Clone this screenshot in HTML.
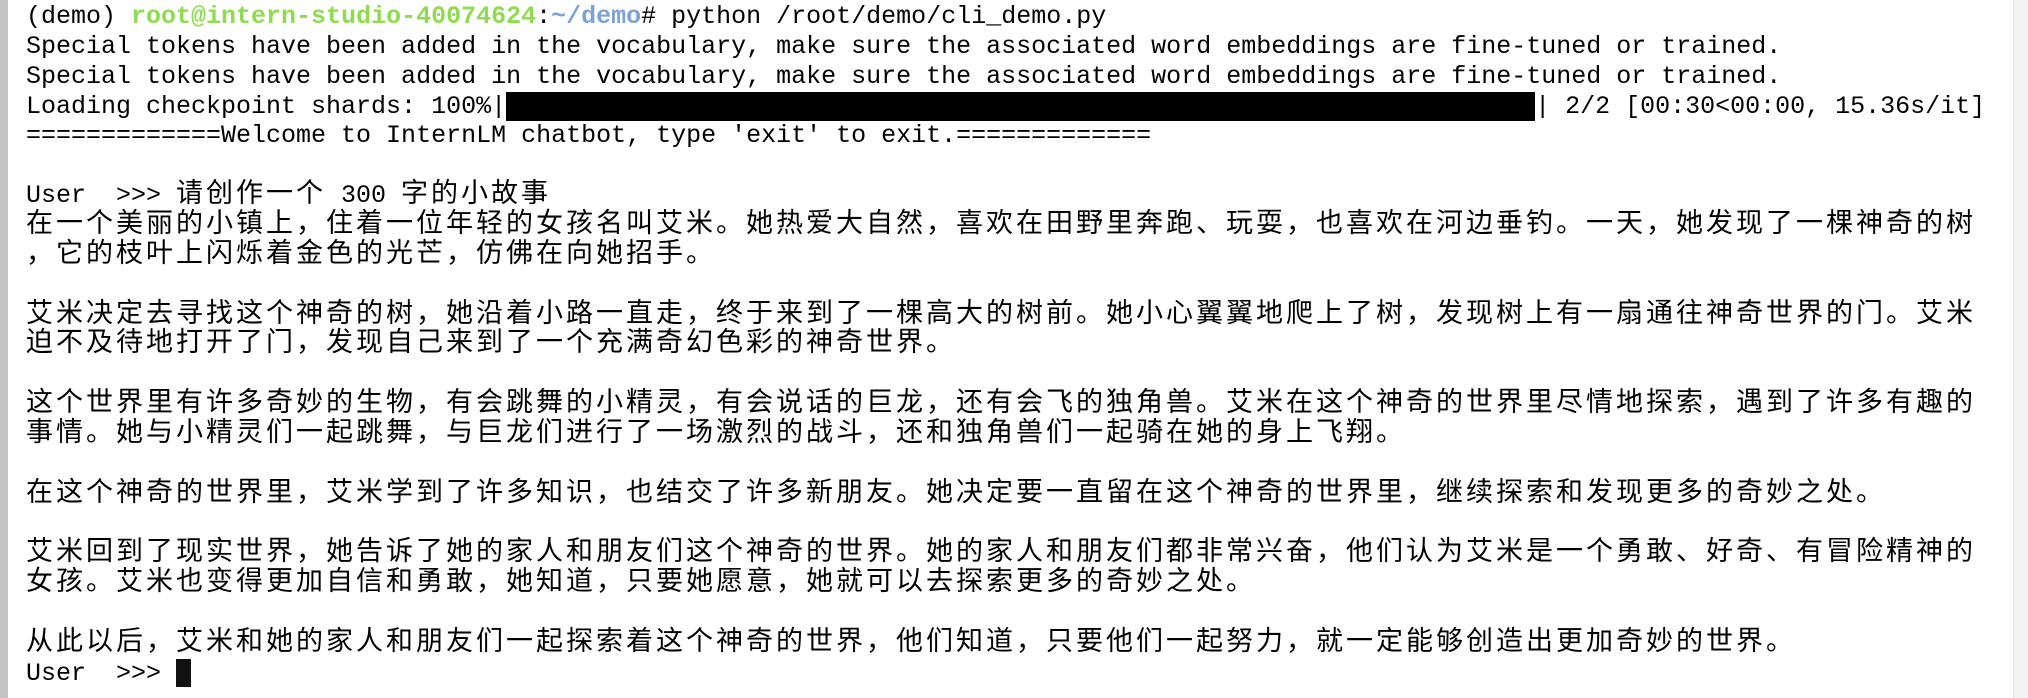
<!DOCTYPE html>
<html><head><meta charset="utf-8"><style>
html,body{margin:0;padding:0;}
body{width:2028px;height:698px;background:#fff;position:relative;overflow:hidden;}
.lb{position:absolute;left:0;top:0;width:8px;height:698px;background:#c4c4c4;}
.rb{position:absolute;left:2013px;top:0;width:15px;height:698px;background:#f3f3f3;border-left:1px solid #e2e2e2;}
pre{position:absolute;left:26px;top:2px;margin:0;font-family:"Liberation Mono","Noto Sans CJK SC",monospace;font-size:25px;line-height:29.86px;color:#000;white-space:pre;}
.c{letter-spacing:3px;font-size:27px;font-family:"Liberation Mono","Noto Sans CJK SC",sans-serif;line-height:0;}
.g{color:#8fdc4f;font-weight:bold;}
.b{color:#7ea3d3;font-weight:bold;}
.bar{display:inline-block;width:1029px;height:29.86px;background:#000;vertical-align:top;}
.cur{display:inline-block;width:15px;height:28px;background:#111;vertical-align:top;}
</style></head><body>
<div class="lb"></div><div class="rb"></div>
<pre>(demo) <span class="g">root@intern-studio-40074624</span>:<span class="b">~/demo</span># python /root/demo/cli_demo.py
Special tokens have been added in the vocabulary, make sure the associated word embeddings are fine-tuned or trained.
Special tokens have been added in the vocabulary, make sure the associated word embeddings are fine-tuned or trained.
Loading checkpoint shards: 100%|<span class="bar"></span>| 2/2 [00:30&lt;00:00, 15.36s/it]
=============Welcome to InternLM chatbot, type 'exit' to exit.=============

User  &gt;&gt;&gt; <span class="c">请创作一个</span> 300 <span class="c">字的小故事</span>
<span class="c">在一个美丽的小镇上，住着一位年轻的女孩名叫艾米。她热爱大自然，喜欢在田野里奔跑、玩耍，也喜欢在河边垂钓。一天，她发现了一棵神奇的树</span>
<span class="c">，它的枝叶上闪烁着金色的光芒，仿佛在向她招手。</span>

<span class="c">艾米决定去寻找这个神奇的树，她沿着小路一直走，终于来到了一棵高大的树前。她小心翼翼地爬上了树，发现树上有一扇通往神奇世界的门。艾米</span>
<span class="c">迫不及待地打开了门，发现自己来到了一个充满奇幻色彩的神奇世界。</span>

<span class="c">这个世界里有许多奇妙的生物，有会跳舞的小精灵，有会说话的巨龙，还有会飞的独角兽。艾米在这个神奇的世界里尽情地探索，遇到了许多有趣的</span>
<span class="c">事情。她与小精灵们一起跳舞，与巨龙们进行了一场激烈的战斗，还和独角兽们一起骑在她的身上飞翔。</span>

<span class="c">在这个神奇的世界里，艾米学到了许多知识，也结交了许多新朋友。她决定要一直留在这个神奇的世界里，继续探索和发现更多的奇妙之处。</span>

<span class="c">艾米回到了现实世界，她告诉了她的家人和朋友们这个神奇的世界。她的家人和朋友们都非常兴奋，他们认为艾米是一个勇敢、好奇、有冒险精神的</span>
<span class="c">女孩。艾米也变得更加自信和勇敢，她知道，只要她愿意，她就可以去探索更多的奇妙之处。</span>

<span class="c">从此以后，艾米和她的家人和朋友们一起探索着这个神奇的世界，他们知道，只要他们一起努力，就一定能够创造出更加奇妙的世界。</span>
User  &gt;&gt;&gt; <span class="cur"></span></pre>
</body></html>
